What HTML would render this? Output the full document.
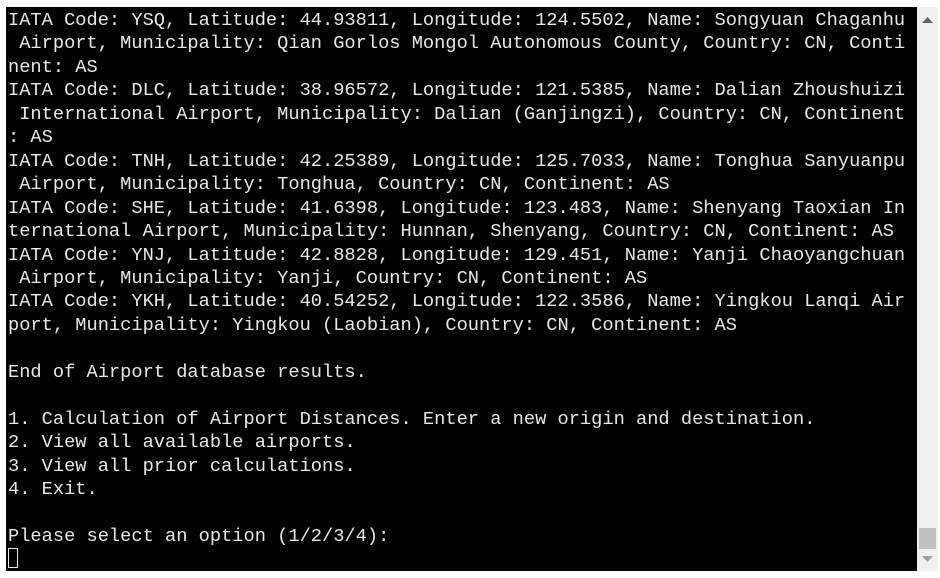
<!DOCTYPE html>
<html><head><style>
body{margin:0;width:940px;height:578px;background:#fff;position:relative;overflow:hidden}
#t{position:absolute;left:6px;top:7px;width:911px;height:564px;background:#000}
pre{margin:0;position:absolute;left:2px;top:2px;font-family:"Liberation Mono",monospace;font-size:18.7px;line-height:23.45px;color:#e8e8e8;letter-spacing:0}
#sb{position:absolute;left:917px;top:7px;width:21px;height:564px;background:#f0f0f0}
#th{position:absolute;left:2px;top:521px;width:17px;height:21px;background:#c1c1c1}
.cur{display:inline-block;width:10px;height:20px;border:1px solid #e8e8e8;box-sizing:border-box;vertical-align:-4px}
</style></head><body>
<div id="t"><pre>IATA Code: YSQ, Latitude: 44.93811, Longitude: 124.5502, Name: Songyuan Chaganhu
 Airport, Municipality: Qian Gorlos Mongol Autonomous County, Country: CN, Conti
nent: AS
IATA Code: DLC, Latitude: 38.96572, Longitude: 121.5385, Name: Dalian Zhoushuizi
 International Airport, Municipality: Dalian (Ganjingzi), Country: CN, Continent
: AS
IATA Code: TNH, Latitude: 42.25389, Longitude: 125.7033, Name: Tonghua Sanyuanpu
 Airport, Municipality: Tonghua, Country: CN, Continent: AS
IATA Code: SHE, Latitude: 41.6398, Longitude: 123.483, Name: Shenyang Taoxian In
ternational Airport, Municipality: Hunnan, Shenyang, Country: CN, Continent: AS
IATA Code: YNJ, Latitude: 42.8828, Longitude: 129.451, Name: Yanji Chaoyangchuan
 Airport, Municipality: Yanji, Country: CN, Continent: AS
IATA Code: YKH, Latitude: 40.54252, Longitude: 122.3586, Name: Yingkou Lanqi Air
port, Municipality: Yingkou (Laobian), Country: CN, Continent: AS

End of Airport database results.

1. Calculation of Airport Distances. Enter a new origin and destination.
2. View all available airports.
3. View all prior calculations.
4. Exit.

Please select an option (1/2/3/4):
<span class="cur"></span></pre></div>
<div id="sb"><svg style="position:absolute;left:5px;top:10px" width="11" height="6"><polygon points="0,6 5.5,0 11,6" fill="#606060"/></svg><div id="th"></div><svg style="position:absolute;left:5px;top:549px" width="11" height="6"><polygon points="0,0 5.5,6 11,0" fill="#a0a0a0"/></svg></div>
</body></html>
